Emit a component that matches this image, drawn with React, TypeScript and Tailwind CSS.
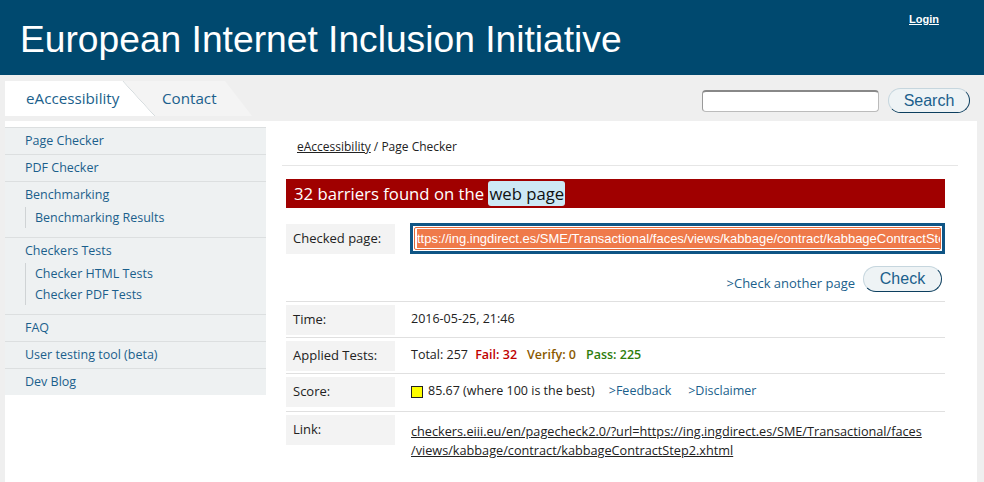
import React from "react";

const sideItems: { label: string; children?: string[] }[] = [
  { label: "Page Checker" },
  { label: "PDF Checker" },
  { label: "Benchmarking", children: ["Benchmarking Results"] },
  { label: "Checkers Tests", children: ["Checker HTML Tests", "Checker PDF Tests"] },
  { label: "FAQ" },
  { label: "User testing tool (beta)" },
  { label: "Dev Blog" },
];

const Label = ({ children }: { children: React.ReactNode }) => (
  <div className="w-[109px] h-[30px] shrink-0 bg-[#f3f3f3] pl-[7px] flex items-center text-[13px] text-[#222]">
    {children}
  </div>
);

export default function App() {
  return (
    <div className="w-[984px] h-[482px] overflow-hidden bg-[#efefef] font-['Open_Sans',sans-serif] text-[#222]">
      {/* Header */}
      <header className="relative h-[75px] bg-[#00496f] text-white">
        <h1 className="pl-[20px] pt-[17px] font-['Liberation_Sans',Arial,sans-serif] text-[37.2px] leading-[44px]">
          European Internet Inclusion Initiative
        </h1>
        <a className="absolute left-[909px] top-[11px] font-['Liberation_Sans',Arial,sans-serif] text-[11px] font-bold underline">
          Login
        </a>
      </header>

      {/* Tabs + search */}
      <div className="h-[46px] flex items-start pt-[6px] pl-[5px] pr-[14px]">
        <div className="relative z-10 h-[35px] w-[150px] bg-white [clip-path:polygon(0_0,118px_0,150px_100%,0_100%)] flex items-center pl-[21px] text-[15.2px] text-[#1b5f8c]">
          eAccessibility
          <svg className="absolute left-0 top-0" width="150" height="35">
            <line x1="118" y1="0" x2="150" y2="35" stroke="#b9c4c8" strokeWidth="1" />
          </svg>
        </div>
        <div className="h-[35px] w-[129px] -ml-[32px] bg-[#f4f4f4] [clip-path:polygon(0_0,102px_0,129px_100%,32px_100%)] flex items-center pl-[39px] text-[15.2px] text-[#1b5f8c]">
          Contact
        </div>
        <div className="ml-auto flex items-center gap-[9px] mt-[7px]">
          <input className="w-[177px] h-[22px] bg-white rounded-[4px] border border-[#bbb] border-t-2 border-t-[#888] border-l-[#999]" />
          <button className="h-[25px] w-[82px] rounded-full bg-[#eef3f5] border border-[#c6d6de] border-b-[#0d3f5f] border-r-[#0d3f5f] font-['Liberation_Sans',Arial,sans-serif] text-[16px] text-[#1b5f8c]">
            Search
          </button>
        </div>
      </div>

      {/* Main */}
      <div className="ml-[5px] w-[972px] h-[400px] bg-white flex">
        {/* Sidebar */}
        <nav className="w-[261px] mt-[6px] self-start bg-[#eef1f2] text-[12.5px] text-[#1b5f8c]">
          {sideItems.map((it) => (
            <div key={it.label} className="border-t border-[#dcdfe0] pl-[20px] pt-[4px] pb-[5px]">
              <div className="leading-[17px]">{it.label}</div>
              {it.children && (
                <div className="mt-[4px] mb-[4px] border-l border-[#cfd3d5] pl-[9px] flex flex-col">
                  {it.children.map((c) => (
                    <div key={c} className="leading-[21px]">
                      {c}
                    </div>
                  ))}
                </div>
              )}
            </div>
          ))}
        </nav>

        {/* Content */}
        <main className="ml-[20px] w-[659px]">
          <div className="pt-[17px] pl-[11px] h-[44px] text-[12px]">
            <span className="underline">eAccessibility</span> / Page Checker
          </div>
          <div className="-ml-[4px] w-[676px] border-t border-[#e6e6e6]" />

          <div className="mt-[13px] h-[29px] bg-[#a00000] flex items-center pl-[8px] text-[16.7px] text-white">
            32 barriers found on the&nbsp;
            <span className="bg-[#cde9f5] text-[#111] rounded-[3px] px-[1px] leading-[25px]">web page</span>
          </div>

          <div className="mt-[15px] flex items-center">
            <Label>Checked page:</Label>
            <div className="ml-[15px] flex-1 min-w-0 h-[31px] border-[3px] border-[#0f5585] bg-white p-[1px]">
              <div className="h-full border border-[#e0683a] rounded-[2px] bg-white px-[2px] flex items-center overflow-hidden">
                <span className="bg-[#ef7a4a] text-white whitespace-nowrap font-['Liberation_Sans',Arial,sans-serif] text-[13px] leading-[19px]">
                  ttps://ing.ingdirect.es/SME/Transactional/faces/views/kabbage/contract/kabbageContractStep2.xhtml
                </span>
              </div>
            </div>
          </div>

          <div className="mt-[11px] flex items-center justify-end gap-[8px] pr-[3px]">
            <span className="text-[13px] text-[#1b5f8c] mt-[9px]">&gt;Check another page</span>
            <button className="h-[26px] w-[79px] rounded-full bg-[#eef3f5] border border-[#c6d6de] border-b-[#0d3f5f] border-r-[#0d3f5f] font-['Liberation_Sans',Arial,sans-serif] text-[16px] text-[#1b5f8c]">
              Check
            </button>
          </div>

          <div className="mt-[7px] border-t border-[#e0e0e0] pt-[3px] pb-[2px] flex items-center">
            <Label>Time:</Label>
            <span className="ml-[16px] text-[12.5px]">2016-05-25, 21:46</span>
          </div>
          <div className="border-t border-[#e0e0e0] pt-[3px] pb-[2px] flex items-center">
            <Label>Applied Tests:</Label>
            <span className="ml-[16px] text-[12.5px]">
              Total: 257 <span className="ml-[4px] font-semibold text-[#c00000]">Fail: 32</span>
              <span className="ml-[10px] font-semibold text-[#8b5a00]">Verify: 0</span>
              <span className="ml-[10px] font-semibold text-[#2e7d0c]">Pass: 225</span>
            </span>
          </div>
          <div className="border-t border-[#e0e0e0] pt-[3px] pb-[4px] flex items-center">
            <Label>Score:</Label>
            <span className="ml-[16px] text-[12.5px] flex items-center">
              <span className="inline-block w-[12px] h-[12px] bg-[#ffff00] border border-[#222] mr-[5px]" />
              85.67 (where 100 is the best)
              <span className="ml-[14px] text-[#1b5f8c]">&gt;Feedback</span>
              <span className="ml-[17px] text-[#1b5f8c]">&gt;Disclaimer</span>
            </span>
          </div>
          <div className="border-t border-[#e0e0e0] pt-[3px] flex items-start">
            <Label>Link:</Label>
            <a className="ml-[16px] mt-[7px] w-[530px] text-[12.7px] leading-[19px] underline">
              checkers.eiii.eu/en/pagecheck2.0/?url=https://ing.ingdirect.es/SME/Transactional/faces
              <br />
              /views/kabbage/contract/kabbageContractStep2.xhtml
            </a>
          </div>
        </main>
      </div>
    </div>
  );
}
